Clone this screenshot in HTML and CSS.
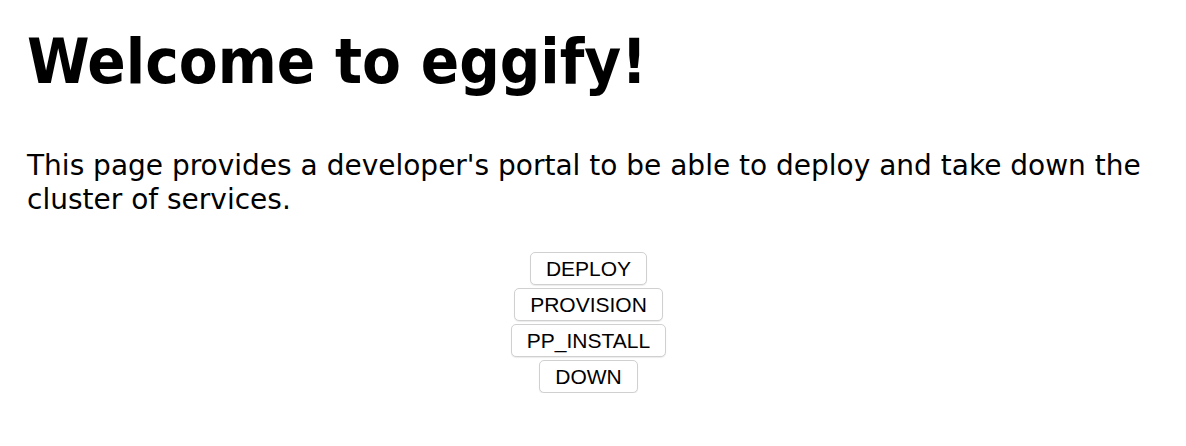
FILE: index.html
```html
<!DOCTYPE html>
<html lang="en">
<head>
  <meta charset="UTF-8" />
  <meta name="viewport" content="width=device-width, initial-scale=1.0" />
  <title>eggify</title>
  <link rel="stylesheet" href="styles.css">
</head>
<body>

<main class="portal">
  <h1 class="titulo">Welcome to eggify!</h1>
  <p class="intro">This page provides a developer's portal to be able to deploy and take down the cluster of services.</p>

  <div class="acciones">
    <button class="btn-accion">DEPLOY</button>
    <button class="btn-accion">PROVISION</button>
    <button class="btn-accion">PP_INSTALL</button>
    <button class="btn-accion">DOWN</button>
  </div>
</main>

</body>
</html>
```

FILE: styles.css
```css
body {
  margin: 0;
  font-family: "DejaVu Sans", sans-serif;
  background-color: #fff;
  color: #000;
}

.portal {
  padding: 0 36px 0 27px;
}

.titulo {
  margin: 0;
  padding-top: 22px;
  font-family: "DejaVu Sans Condensed", "DejaVu Sans", sans-serif;
  font-size: 63px;
  font-weight: bold;
  line-height: 80px;
}

.intro {
  margin: 47px 0 0;
  font-size: 28px;
  line-height: 34px;
}

.acciones {
  display: flex;
  flex-direction: column;
  align-items: center;
  gap: 3px;
  margin-top: 35px;
}

.btn-accion {
  font-family: "Liberation Sans", Arial, sans-serif;
  font-size: 21px;
  line-height: 23px;
  padding: 4px 15px;
  color: #000;
  background-color: #fff;
  border: 1px solid #d0d0d0;
  border-radius: 5px;
  box-shadow: 0 1px 1px rgba(0, 0, 0, 0.08);
  cursor: pointer;
}
```
